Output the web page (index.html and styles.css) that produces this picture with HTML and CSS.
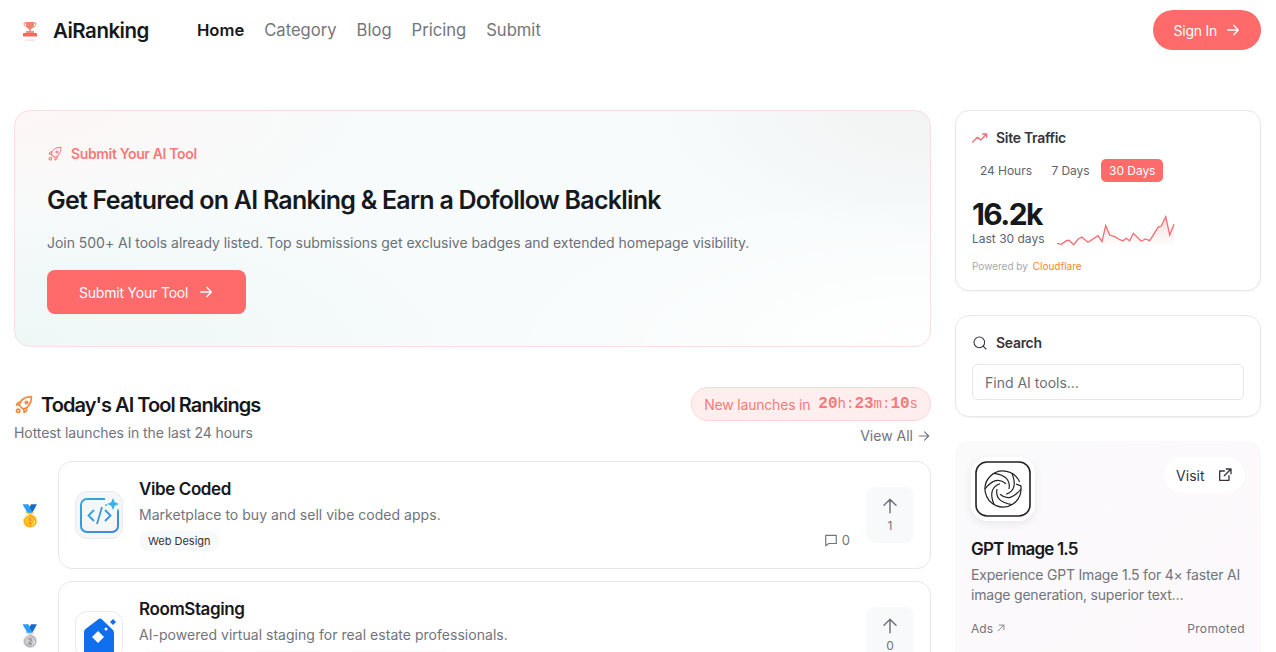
FILE: index.html
```html
<!DOCTYPE html>
<html lang="en">

<head>
  <meta charset="utf-8">
  <title>AiRanking</title>
  <meta name="viewport" content="width=device-width, initial-scale=1">
  <link rel="stylesheet" href="styles.css">
</head>

<body>
  <header class="topbar">
    <div class="brand">
      <svg class="brand-icon" width="20" height="26" viewBox="0 0 20 26">
        <path d="M6 5h8v3c0 2.400-1.600 4-4 4s-4-1.600-4-4z" fill="#f5806f"/>
        <path d="M6 6H4c0 2.500 1 3.500 2.500 4M14 6h2c0 2.500-1 3.500-2.500 4" fill="none" stroke="#f5806f" stroke-width="1"/>
        <rect x="9.200" y="11.500" width="1.600" height="3" fill="#f5806f"/>
        <rect x="6" y="14" width="8" height="2" fill="#f78d80"/>
        <rect x="3" y="16" width="14" height="3.500" rx="0.500" fill="#f4685f"/>
        <ellipse cx="10" cy="23" rx="6" ry="0.800" fill="#f8e0db"/>
      </svg>
      <span class="brand-name">AiRanking</span>
    </div>
    <nav class="nav">
      <a class="nav-link active">Home</a>
      <a class="nav-link">Category</a>
      <a class="nav-link">Blog</a>
      <a class="nav-link">Pricing</a>
      <a class="nav-link">Submit</a>
    </nav>
    <a class="signin">Sign In
      <svg width="16" height="16" viewBox="0 0 24 24" class="line-icon"><path d="M4 12h16M13 5l7 7-7 7"/></svg>
    </a>
  </header>

  <main class="layout">
    <div class="left">
      <section class="hero">
        <div class="hero-kicker">
          <svg width="16" height="16" viewBox="0 0 24 24" class="line-icon thin"><path d="M9 15l-3-3c1-5 6-10 15-10 0 9-5 14-10 15z"/><circle cx="15" cy="9" r="1.500"/><path d="M6 12H3l2-3h3M12 18v3l3-2v-3"/><circle cx="5" cy="19" r="2"/></svg>
          Submit Your AI Tool
        </div>
        <h1 class="hero-title">Get Featured on AI Ranking &amp; Earn a Dofollow Backlink</h1>
        <p class="hero-text">Join 500+ AI tools already listed. Top submissions get exclusive badges and extended homepage visibility.</p>
        <a class="hero-btn">Submit Your Tool
          <svg width="16" height="16" viewBox="0 0 24 24" class="line-icon"><path d="M4 12h16M13 5l7 7-7 7"/></svg>
        </a>
      </section>

      <section class="rank-head">
        <div>
          <h2 class="rank-title">
            <svg width="20" height="20" viewBox="0 0 24 24" class="line-icon rocket"><path d="M9 15l-3-3c1-5 6-10 15-10 0 9-5 14-10 15z"/><circle cx="15" cy="9" r="1.500"/><path d="M6 12H3l2-3h3M12 18v3l3-2v-3"/><circle cx="5" cy="19" r="2"/></svg>
            Today's AI Tool Rankings
          </h2>
          <p class="rank-sub">Hottest launches in the last 24 hours</p>
        </div>
        <div class="rank-side">
          <div class="countdown">New launches in
            <span class="clock"><b>20</b>h:<b>23</b>m:<b>10</b>s</span>
          </div>
          <a class="view-all">View All
            <svg width="14" height="14" viewBox="0 0 24 24" class="line-icon"><path d="M4 12h16M13 5l7 7-7 7"/></svg>
          </a>
        </div>
      </section>

      <div class="rank-row">
        <div class="medal">🥇</div>
        <article class="tool">
          <div class="tool-logo soft">
            <svg width="46" height="46" viewBox="0 0 46 46">
              <defs>
                <linearGradient id="vibe" x1="0" y1="0" x2="1" y2="1">
                  <stop offset="0" stop-color="#2fa8dc"/>
                  <stop offset="1" stop-color="#3f86e0"/>
                </linearGradient>
              </defs>
              <path d="M29 7H11a6 6 0 0 0-6 6v21a6 6 0 0 0 6 6h25a6 6 0 0 0 6-6V19" fill="none" stroke="url(#vibe)" stroke-width="2"/>
              <path d="M18 18l-5.500 5.500L18 29M29 18l5.500 5.500L29 29M26 15l-5 17" fill="none" stroke="url(#vibe)" stroke-width="1.800"/>
              <path d="M37 6l1.800 4.200L43 12l-4.200 1.800L37 18l-1.800-4.200L31 12l4.200-1.800z" fill="#35b4e6"/>
              <circle cx="30" cy="13" r="1" fill="#35b4e6"/>
              <circle cx="42" cy="18" r="1" fill="#35b4e6"/>
            </svg>
          </div>
          <div class="tool-body">
            <h3 class="tool-name">Vibe Coded</h3>
            <p class="tool-desc">Marketplace to buy and sell vibe coded apps.</p>
            <div class="tags"><span class="tag">Web Design</span></div>
          </div>
          <div class="comments">
            <svg width="14" height="14" viewBox="0 0 24 24" class="line-icon"><path d="M3 4h18v14H8l-5 4z"/></svg>
            0
          </div>
          <div class="vote">
            <svg width="18" height="18" viewBox="0 0 24 24" class="line-icon"><path d="M12 21V3M4 11l8-8 8 8"/></svg>
            <span>1</span>
          </div>
        </article>
      </div>

      <div class="rank-row">
        <div class="medal">🥈</div>
        <article class="tool">
          <div class="tool-logo">
            <svg width="46" height="46" viewBox="0 0 46 46">
              <path d="M22 7.500a3 3 0 0 1 4 0L36 17a5 5 0 0 1 2 4v18a6 6 0 0 1-6 6H14a6 6 0 0 1-6-6V20a4 4 0 0 1 1.500-3z" fill="#0f6fec"/>
              <path d="M22 19l6 6-6 6-6-6z" fill="#fff"/>
              <circle cx="30" cy="17" r="1.500" fill="#fff"/>
              <path d="M37 7l3 3-3 3-3-3z" fill="#0f6fec"/>
            </svg>
          </div>
          <div class="tool-body">
            <h3 class="tool-name">RoomStaging</h3>
            <p class="tool-desc">AI-powered virtual staging for real estate professionals.</p>
            <div class="tags"><span class="tag wide1">Image Editor</span><span class="tag">Real Estate</span><span class="tag wide2">Image Generator</span></div>
          </div>
          <div class="vote">
            <svg width="18" height="18" viewBox="0 0 24 24" class="line-icon"><path d="M12 21V3M4 11l8-8 8 8"/></svg>
            <span>0</span>
          </div>
        </article>
      </div>
    </div>

    <aside class="right">
      <section class="panel traffic">
        <h4 class="panel-title">
          <svg width="16" height="16" viewBox="0 0 24 24" class="line-icon coral"><path d="M1 18l7-7 5 4 9-9M16 6h6v5"/></svg>
          Site Traffic
        </h4>
        <div class="tabs">
          <span class="tab">24 Hours</span>
          <span class="tab">7 Days</span>
          <span class="tab on">30 Days</span>
        </div>
        <div class="stat-row">
          <div class="stat-box">
            <div class="stat">16.2k</div>
            <div class="stat-sub">Last 30 days</div>
          </div>
          <svg class="spark" width="118" height="34" viewBox="0 0 118 34">
            <defs>
              <linearGradient id="fade" x1="0" y1="0" x2="0" y2="1">
                <stop offset="0" stop-color="#e8a0a4" stop-opacity="0.350"/>
                <stop offset="1" stop-color="#e8a0a4" stop-opacity="0"/>
              </linearGradient>
            </defs>
            <path d="M0 28.300L4.300 29.300 9.300 25.700 12 25.300 16.700 29.700 21 24.300 24.700 22 31 27.300 41 20.700 45 26.700 48.700 10.700 52.700 20 57.700 21.700 63.300 25 66 25.700 69.300 23.300 72.700 25.700 76.300 18.300 84.300 26.300 88.300 24 92.700 25.700 101 12.300 104.300 11 108.700 1.700 112.700 20 117 9.300V32H0z" fill="url(#fade)"/>
            <path d="M0 28.300L4.300 29.300 9.300 25.700 12 25.300 16.700 29.700 21 24.300 24.700 22 31 27.300 41 20.700 45 26.700 48.700 10.700 52.700 20 57.700 21.700 63.300 25 66 25.700 69.300 23.300 72.700 25.700 76.300 18.300 84.300 26.300 88.300 24 92.700 25.700 101 12.300 104.300 11 108.700 1.700 112.700 20 117 9.300" fill="none" stroke="#f26d73" stroke-width="1.300"/>
          </svg>
        </div>
        <div class="powered">Powered by <span class="cf">Cloudflare</span></div>
      </section>

      <section class="panel search">
        <h4 class="panel-title">
          <svg width="16" height="16" viewBox="0 0 24 24" class="line-icon thin"><circle cx="11" cy="11" r="8"/><path d="M21 21l-4.300-4.300"/></svg>
          Search
        </h4>
        <input class="search-input" type="text" placeholder="Find AI tools...">
      </section>

      <section class="ad">
        <div class="ad-top">
          <div class="ad-logo">
            <svg width="56" height="56" viewBox="0 0 56 56">
              <rect x="1" y="1" width="54" height="54" rx="11" fill="#fff" stroke="#222" stroke-width="1.600"/>
              <g fill="none" stroke="#222" stroke-width="1.200">
                <path d="M44.600 21A18 18 0 1 0 46 28V25L41 23"/>
                <path d="M46 28Q35 42 25 33.200"/>
                <path d="M46 28Q35 42 25 33.200" transform="rotate(60 28 28)"/>
                <path d="M46 28Q35 42 25 33.200" transform="rotate(120 28 28)"/>
                <path d="M46 28Q35 42 25 33.200" transform="rotate(180 28 28)"/>
                <path d="M46 28Q35 42 25 33.200" transform="rotate(240 28 28)"/>
                <path d="M46 28Q35 42 25 33.200" transform="rotate(300 28 28)"/>
              </g>
            </svg>
          </div>
          <a class="visit">Visit
            <svg width="16" height="16" viewBox="0 0 24 24" class="line-icon"><path d="M18 13v7H4V6h7M14 3h7v7M21 3L11 13"/></svg>
          </a>
        </div>
        <h3 class="ad-title">GPT Image 1.5</h3>
        <p class="ad-text">Experience GPT Image 1.5 for 4× faster AI image generation, superior text…</p>
        <div class="ad-foot">
          <span>Ads
            <svg width="10" height="10" viewBox="0 0 24 24" class="line-icon"><path d="M5 19L19 5M8 5h11v11"/></svg>
          </span>
          <span class="promoted">Promoted</span>
        </div>
      </section>
    </aside>
  </main>
</body>

</html>
```

FILE: styles.css
```css
* {
  box-sizing: border-box;
}

html,
body {
  height: 652px;
  overflow: hidden;
}

body {
  margin: 0;
  background-color: #fff;
  color: #17181c;
  font-family: Inter, 'Liberation Sans', sans-serif;
}

h1,
h2,
h3,
h4,
p {
  margin: 0;
}

.line-icon {
  fill: none;
  stroke: currentColor;
  stroke-width: 2;
  stroke-linecap: round;
  stroke-linejoin: round;
  flex-shrink: 0;
}

.thin {
  stroke-width: 1.600;
}

.coral {
  color: #f26d73;
}

.topbar {
  display: flex;
  align-items: center;
  height: 60px;
  padding: 0 15px 0 20px;
}

.brand {
  display: flex;
  align-items: center;
  gap: 13px;
  width: 177px;
}

.brand-name {
  font-size: 20.500px;
  font-weight: 600;
  letter-spacing: -0.5px;
}

.nav {
  display: flex;
  gap: 20px;
  font-size: 16.600px;
}

.nav-link {
  color: #74767c;
}

.nav-link.active {
  color: #17181c;
  font-weight: 600;
}

.signin {
  display: flex;
  align-items: center;
  gap: 8px;
  margin-left: auto;
  height: 40px;
  padding: 0 20px 0 20.500px;
  border-radius: 20px;
  background-color: #ff6b6b;
  color: #fff;
  font-size: 14px;
  letter-spacing: -0.25px;
}

.layout {
  display: flex;
  gap: 24px;
  padding: 50px 15px 0 14px;
}

.left {
  display: flex;
  flex-direction: column;
  width: 917px;
}

.right {
  display: flex;
  flex-direction: column;
  gap: 24px;
  width: 306px;
}

.hero {
  height: 237px;
  padding: 34px 32px 0;
  border: 1px solid #f9dfe0;
  border-radius: 16px;
  background:
    radial-gradient(ellipse 40% 55% at 0% 0%, #fdf6f6 0%, rgba(253, 246, 246, 0) 100%),
    radial-gradient(ellipse 30% 55% at 100% 0%, #f2f3f3 0%, rgba(242, 243, 243, 0) 100%),
    radial-gradient(ellipse 50% 70% at 0% 100%, #edf8f6 0%, rgba(237, 248, 246, 0) 100%),
    radial-gradient(ellipse 50% 70% at 100% 100%, #ffffff 0%, rgba(255, 255, 255, 0) 100%),
    #f7fbfb;
}

.hero-kicker {
  display: flex;
  align-items: center;
  gap: 8px;
  color: #f9797a;
  font-size: 14px;
  font-weight: 600;
  letter-spacing: -0.35px;
}

.hero-title {
  margin-top: 23px;
  font-size: 25px;
  font-weight: 600;
  letter-spacing: -0.76px;
}

.hero-text {
  margin-top: 19px;
  color: #6b7078;
  font-size: 14px;
  letter-spacing: -0.03px;
}

.hero-btn {
  display: inline-flex;
  align-items: center;
  gap: 10px;
  margin-top: 19px;
  height: 44px;
  padding: 0 32px;
  border-radius: 8px;
  background-color: #ff6b6b;
  color: #fff;
  font-size: 14px;
  letter-spacing: -0.2px;
}

.rank-head {
  display: flex;
  justify-content: space-between;
  height: 74px;
  margin-top: 40px;
}

.rank-title {
  display: flex;
  align-items: center;
  gap: 7px;
  margin-top: 6px;
  font-size: 20px;
  font-weight: 600;
  letter-spacing: -0.95px;
}

.rocket {
  color: #f08a3c;
}

.rank-sub {
  margin-top: 7px;
  color: #70747c;
  font-size: 14px;
  letter-spacing: -0.08px;
}

.rank-side {
  display: flex;
  flex-direction: column;
  align-items: flex-end;
}

.countdown {
  display: flex;
  align-items: center;
  gap: 8px;
  height: 34px;
  padding: 0 12px;
  border: 1px solid #fdd5d5;
  border-radius: 17px;
  background-color: #ffeeee;
  color: #f57b7b;
  font-size: 14px;
  letter-spacing: -0.2px;
}

.clock {
  font-family: 'Liberation Mono', monospace;
  font-size: 14px;
  letter-spacing: 0;
}

.clock b {
  font-size: 16px;
}

.view-all {
  display: flex;
  align-items: center;
  gap: 4px;
  margin-top: 6px;
  color: #70747c;
  font-size: 14px;
  letter-spacing: 0;
}

.rank-row {
  display: flex;
  align-items: center;
  margin-bottom: 12px;
}

.medal {
  width: 44px;
  padding-left: 3px;
  font-family: 'Noto Sans', sans-serif;
  font-size: 21px;
}

.tool {
  display: flex;
  align-items: center;
  flex: 1;
  height: 108px;
  padding: 0 16px;
  border: 1px solid #e6e7ea;
  border-radius: 14px;
  background-color: #fff;
}

.tool-logo {
  display: flex;
  align-items: center;
  justify-content: center;
  width: 48px;
  height: 48px;
  border: 1px solid #e9eaec;
  border-radius: 12px;
}

.tool-logo.soft {
  background-color: #f5f6f7;
}

.tool-body {
  flex: 1;
  margin-left: 16px;
}

.tool-name {
  font-size: 17px;
  font-weight: 600;
  letter-spacing: -0.4px;
}

.tool-desc {
  margin-top: 7px;
  color: #70747c;
  font-size: 14px;
  letter-spacing: 0.03px;
}

.tags {
  display: flex;
  gap: 18px;
  margin-top: 8px;
}

.tag {
  padding: 3px 9px;
  border-radius: 11px;
  background-color: #f8f9fa;
  color: #33353a;
  font-size: 11px;
}

.wide1 {
  min-width: 93px;
}

.wide2 {
  min-width: 109px;
}

.comments {
  display: flex;
  align-items: center;
  gap: 4px;
  align-self: flex-end;
  margin: 0 16px 20px 0;
  color: #70747c;
  font-size: 13px;
}

.vote {
  display: flex;
  flex-direction: column;
  align-items: center;
  justify-content: center;
  gap: 3px;
  width: 48px;
  height: 56px;
  border-radius: 10px;
  background-color: #f8f9fa;
  color: #70747c;
  font-size: 12px;
}

.panel {
  padding: 18px 16px;
  border: 1px solid #e6e7ea;
  border-radius: 14px;
  box-shadow: 0 1px 2px rgba(0, 0, 0, 0.05);
}

.panel-title {
  display: flex;
  align-items: center;
  gap: 8px;
  color: #33353a;
  font-size: 14px;
  font-weight: 600;
  letter-spacing: -0.3px;
}

.traffic {
  height: 181px;
}

.tabs {
  display: flex;
  gap: 3.500px;
  margin-top: 13px;
}

.tab {
  padding: 4px 8px;
  border-radius: 5px;
  color: #5f636b;
  font-size: 12px;
  line-height: 15px;
  letter-spacing: -0.05px;
}

.tab.on {
  background-color: #ff6b6b;
  color: #fff;
}

.stat-row {
  display: flex;
  align-items: flex-end;
  gap: 13px;
  margin-top: 15px;
}

.stat-box {
  width: 72px;
  white-space: nowrap;
}

.stat {
  font-size: 30px;
  font-weight: 700;
  line-height: 35px;
  letter-spacing: -1.6px;
}

.stat-sub {
  color: #60646c;
  font-size: 12px;
  line-height: 14px;
}

.spark {
  margin-bottom: -3px;
  flex-shrink: 0;
}

.powered {
  margin-top: 14px;
  color: #a5a8ae;
  font-size: 10px;
}

.cf {
  margin-left: 2px;
  color: #f28a2e;
}

.search {
  height: 102px;
}

.search-input {
  display: block;
  width: 100%;
  height: 36px;
  margin-top: 13px;
  padding: 0 12px;
  border: 1px solid #e6e7ea;
  border-radius: 6px;
  font-family: inherit;
  font-size: 14px;
}

.search-input::placeholder {
  color: #6b6f77;
}

.ad {
  height: 240px;
  padding: 16px;
  border-radius: 14px;
  background: linear-gradient(135deg, #fafafb, #fdf8fb);
}

.ad-top {
  display: flex;
  justify-content: space-between;
  align-items: flex-start;
}

.ad-logo {
  padding: 4px;
  border-radius: 16px;
  background-color: #fff;
  box-shadow: 0 3px 8px rgba(0, 0, 0, 0.07);
}

.ad-logo svg {
  display: block;
}

.visit {
  display: flex;
  align-items: center;
  gap: 12px;
  height: 36px;
  padding: 0 12.500px;
  border-radius: 18px;
  background-color: #fff;
  color: #33353a;
  font-size: 14px;
}

.ad-title {
  margin-top: 18px;
  font-size: 17px;
  font-weight: 600;
  letter-spacing: -0.8px;
}

.ad-text {
  margin-top: 6px;
  color: #70747c;
  font-size: 14px;
  line-height: 20px;
  letter-spacing: -0.2px;
}

.ad-foot {
  display: flex;
  justify-content: space-between;
  margin-top: 16px;
  color: #70747c;
  font-size: 12px;
}

.promoted {
  letter-spacing: 0.35px;
}
```
